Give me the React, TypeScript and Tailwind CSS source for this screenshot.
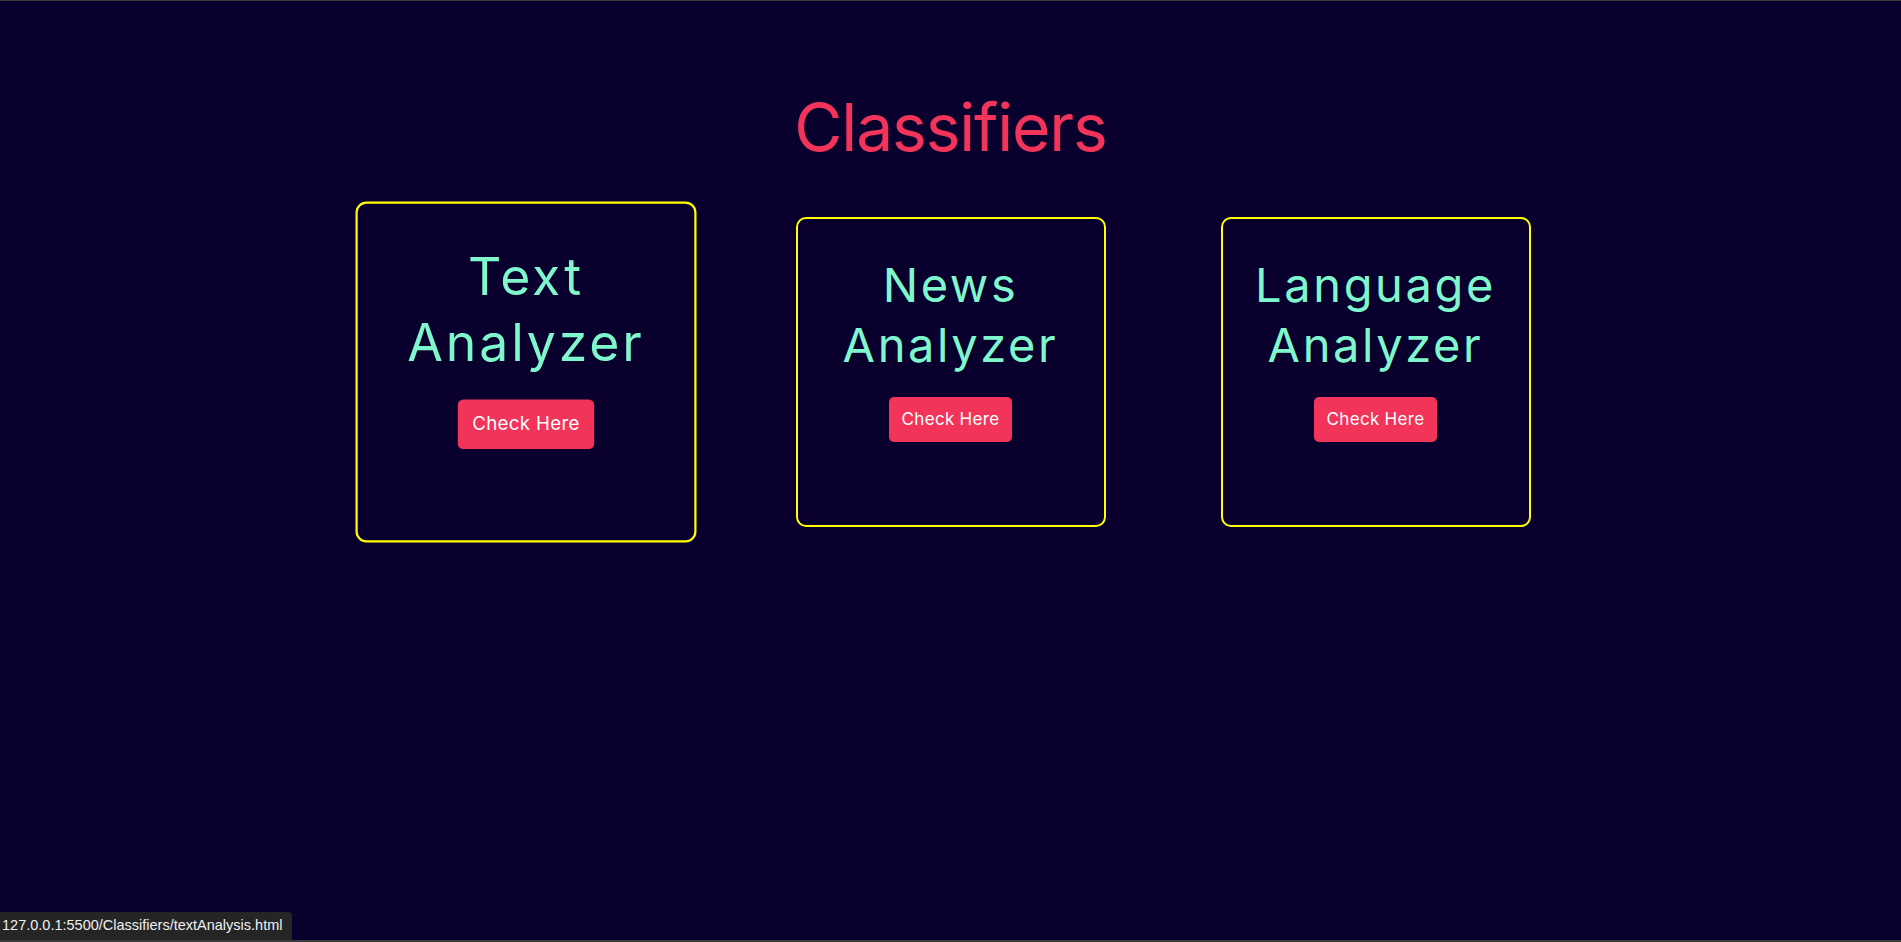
import React from 'react'

const cards = [
  { first: 'Text', second: 'Analyzer', hovered: true },
  { first: 'News', second: 'Analyzer', hovered: false },
  { first: 'Language', second: 'Analyzer', hovered: false },
]

const App = () => {
  return (
    <div
      className="relative h-screen w-full overflow-hidden bg-[#0a002e] border-t border-b-2 border-[#3a3a3a]"
      style={{ fontFamily: 'Inter, "Open Sans", sans-serif' }}
    >
      <h1 className="pt-[86px] text-center text-[66px] leading-[80px] font-normal tracking-[-1.2px] text-[#f2335a]">
        Classifiers
      </h1>

      <div className="mt-[50px] flex items-start justify-center gap-[115px]">
        {cards.map((card, idx) => (
          <div
            key={idx}
            className={`flex h-[310px] w-[310px] flex-col items-center rounded-[10px] border-2 border-[#ffff00] pt-[36px] ${
              card.hovered ? 'scale-110' : ''
            }`}
          >
            <h2 className="text-center text-[47px] leading-[60px] font-normal tracking-[2.6px] text-[#7ff7cc]">
              {card.first}
              <br />
              {card.second}
            </h2>
            <button className="mt-[22px] h-[45px] rounded-[5px] bg-[#f2335a] px-[13px] text-[17px] tracking-[0.3px] text-white">
              Check Here
            </button>
          </div>
        ))}
      </div>

      <div
        className="absolute bottom-0 left-0 flex h-[28px] items-center rounded-tr-[4px] bg-[#252526] pl-[2px] pr-[10px] text-[14.5px] text-[#f0f0f0]"
        style={{ fontFamily: '"Liberation Sans", Arial, sans-serif' }}
      >
        127.0.0.1:5500/Classifiers/textAnalysis.html
      </div>
    </div>
  )
}

export default App
